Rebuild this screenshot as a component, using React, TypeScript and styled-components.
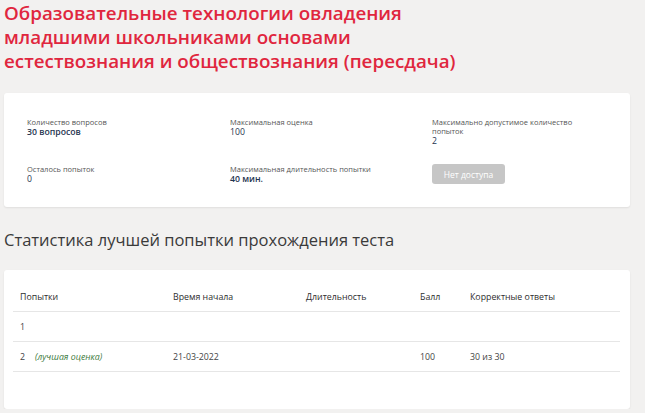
import React from 'react';
import styled, { createGlobalStyle } from 'styled-components';

const GlobalStyle = createGlobalStyle`
  html, body {
    margin: 0;
    padding: 0;
    background: #f2f1f0;
    font-family: "Open Sans", "Noto Sans", sans-serif;
    color: #333;
  }
`;

const StyledPage = styled.div`
  display: flex;
  flex-direction: column;
  padding: 0 15px 0 4px;
`;

const StyledTitle = styled.h1`
  margin: 1px 0 0;
  max-width: 480px;
  font-size: 18.8px;
  line-height: 24px;
  font-weight: 600;
  color: #e0263e;
`;

const StyledCard = styled.div<{ $top: number; $pad: string }>`
  margin-top: ${({ $top }) => $top}px;
  background: #fff;
  border-radius: 3px;
  box-shadow: 0 1px 2px rgba(0, 0, 0, 0.08);
  padding: ${({ $pad }) => $pad};
`;

const StyledGrid = styled.div`
  display: grid;
  grid-template-columns: 203px 202px 1fr;
  row-gap: 18px;
`;

const StyledItem = styled.div`
  display: flex;
  flex-direction: column;
`;

const StyledLabel = styled.span`
  font-size: 7.5px;
  line-height: 9px;
  color: #555;
  max-width: 150px;
`;

const StyledValue = styled.span<{ $bold?: boolean }>`
  font-size: 8.7px;
  line-height: 11px;
  color: #1f3550;
  font-weight: ${({ $bold }) => ($bold ? 600 : 400)};
`;

const StyledButton = styled.button`
  align-self: flex-start;
  margin-top: -1px;
  width: 73px;
  height: 20px;
  border: 0;
  border-radius: 3px;
  background: #c6c6c6;
  color: #fff;
  font-family: inherit;
  font-size: 8.5px;
  padding: 0;
`;

const StyledHeading = styled.h2`
  margin: 22px 0 0;
  font-size: 16.5px;
  line-height: 22px;
  font-weight: 400;
  color: #3a3a3a;
`;

const StyledTable = styled.div`
  display: flex;
  flex-direction: column;
`;

const StyledRow = styled.div`
  display: grid;
  grid-template-columns: 153px 133px 114px 50px 1fr;
  align-items: center;
  height: 29px;
  padding: 0 7px;
  border-bottom: 1px solid #e6e6e6;
`;

const StyledCell = styled.span<{ $head?: boolean }>`
  font-size: 8.8px;
  color: ${({ $head }) => ($head ? '#2e2e2e' : '#444')};
`;

const StyledBest = styled.em`
  margin-left: 10px;
  font-size: 8.8px;
  color: #3c7a3c;
`;

const info = [
  { label: 'Количество вопросов', value: '30 вопросов', bold: true },
  { label: 'Максимальная оценка', value: '100' },
  { label: 'Максимально допустимое количество попыток', value: '2' },
  { label: 'Осталось попыток', value: '0' },
  { label: 'Максимальная длительность попытки', value: '40 мин.', bold: true },
];

const head = ['Попытки', 'Время начала', 'Длительность', 'Балл', 'Корректные ответы'];

export default function App() {
  return (
    <>
      <GlobalStyle />
      <StyledPage>
        <StyledTitle>
          Образовательные технологии овладения младшими школьниками основами
          естествознания и обществознания (пересдача)
        </StyledTitle>

        <StyledCard $top={20} $pad="25px 23px 22px">
          <StyledGrid>
            {info.map((it) => (
              <StyledItem key={it.label}>
                <StyledLabel>{it.label}</StyledLabel>
                <StyledValue $bold={it.bold}>{it.value}</StyledValue>
              </StyledItem>
            ))}
            <StyledItem>
              <StyledButton>Нет доступа</StyledButton>
            </StyledItem>
          </StyledGrid>
        </StyledCard>

        <StyledHeading>Статистика лучшей попытки прохождения теста</StyledHeading>

        <StyledCard $top={19} $pad="12px 10px 37px 9px">
          <StyledTable>
            <StyledRow>
              {head.map((h) => (
                <StyledCell key={h} $head>
                  {h}
                </StyledCell>
              ))}
            </StyledRow>
            <StyledRow>
              <StyledCell>1</StyledCell>
            </StyledRow>
            <StyledRow>
              <StyledCell>
                2<StyledBest>(лучшая оценка)</StyledBest>
              </StyledCell>
              <StyledCell>21-03-2022</StyledCell>
              <StyledCell />
              <StyledCell>100</StyledCell>
              <StyledCell>30 из 30</StyledCell>
            </StyledRow>
          </StyledTable>
        </StyledCard>
      </StyledPage>
    </>
  );
}
